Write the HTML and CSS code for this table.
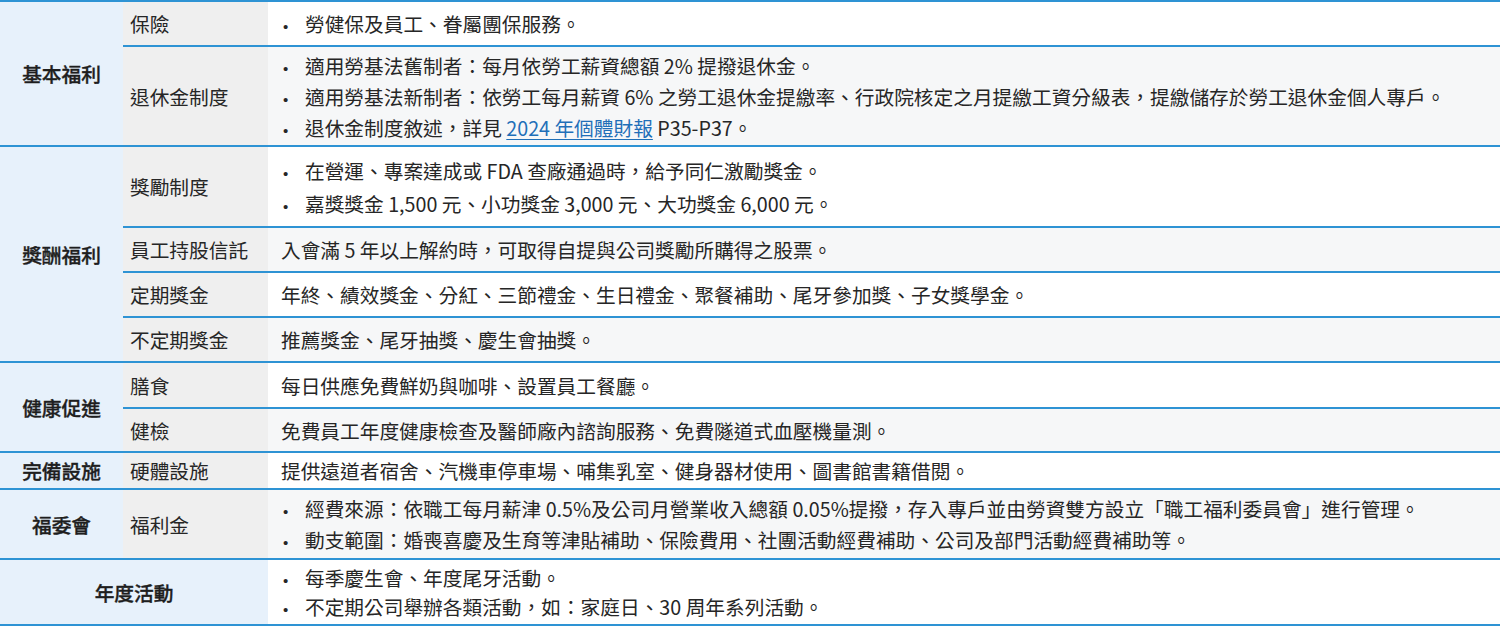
FILE: index.html
```html
<!DOCTYPE html>
<html lang="zh-Hant">
<head>
<meta charset="utf-8">
<title>福利制度</title>
<link rel="stylesheet" href="styles.css">
</head>
<body>
<table class="benefits">
  <colgroup>
    <col class="c-cat">
    <col class="c-item">
    <col class="c-desc">
  </colgroup>
  <tbody>
    <tr class="h43">
      <th class="cat" rowspan="2">基本福利</th>
      <td class="item inner">保險</td>
      <td class="desc inner">
        <ul class="bl"><li>勞健保及員工、眷屬團保服務。</li></ul>
      </td>
    </tr>
    <tr class="h98 alt">
      <td class="item">退休金制度</td>
      <td class="desc">
        <ul class="bl">
          <li>適用勞基法舊制者：每月依勞工薪資總額 2% 提撥退休金。</li>
          <li>適用勞基法新制者：依勞工每月薪資 6% 之勞工退休金提繳率、行政院核定之月提繳工資分級表，提繳儲存於勞工退休金個人專戶。</li>
          <li>退休金制度敘述，詳見 <a href="#">2024 年個體財報</a> P35-P37。</li>
        </ul>
      </td>
    </tr>

    <tr class="h79">
      <th class="cat" rowspan="4">獎酬福利</th>
      <td class="item inner">獎勵制度</td>
      <td class="desc inner">
        <ul class="bl two">
          <li>在營運、專案達成或 FDA 查廠通過時，給予同仁激勵獎金。</li>
          <li>嘉獎獎金 1,500 元、小功獎金 3,000 元、大功獎金 6,000 元。</li>
        </ul>
      </td>
    </tr>
    <tr class="h43 alt">
      <td class="item inner">員工持股信託</td>
      <td class="desc inner">入會滿 5 年以上解約時，可取得自提與公司獎勵所購得之股票。</td>
    </tr>
    <tr class="h43">
      <td class="item inner">定期獎金</td>
      <td class="desc inner">年終、績效獎金、分紅、三節禮金、生日禮金、聚餐補助、尾牙參加獎、子女獎學金。</td>
    </tr>
    <tr class="h43 alt">
      <td class="item">不定期獎金</td>
      <td class="desc">推薦獎金、尾牙抽獎、慶生會抽獎。</td>
    </tr>

    <tr class="h44">
      <th class="cat" rowspan="2">健康促進</th>
      <td class="item inner">膳食</td>
      <td class="desc inner">每日供應免費鮮奶與咖啡、設置員工餐廳。</td>
    </tr>
    <tr class="h42 alt">
      <td class="item">健檢</td>
      <td class="desc">免費員工年度健康檢查及醫師廠內諮詢服務、免費隧道式血壓機量測。</td>
    </tr>

    <tr class="h35">
      <th class="cat">完備設施</th>
      <td class="item">硬體設施</td>
      <td class="desc">提供遠道者宿舍、汽機車停車場、哺集乳室、健身器材使用、圖書館書籍借閱。</td>
    </tr>

    <tr class="h68 alt">
      <th class="cat">福委會</th>
      <td class="item">福利金</td>
      <td class="desc">
        <ul class="bl">
          <li>經費來源：依職工每月薪津 0.5%及公司月營業收入總額 0.05%提撥，存入專戶並由勞資雙方設立「職工福利委員會」進行管理。</li>
          <li>動支範圍：婚喪喜慶及生育等津貼補助、保險費用、社團活動經費補助、公司及部門活動經費補助等。</li>
        </ul>
      </td>
    </tr>

    <tr class="h64">
      <th class="cat" colspan="2">年度活動</th>
      <td class="desc">
        <ul class="bl tight">
          <li>每季慶生會、年度尾牙活動。</li>
          <li>不定期公司舉辦各類活動，如：家庭日、30 周年系列活動。</li>
        </ul>
      </td>
    </tr>
  </tbody>
</table>
</body>
</html>
```

FILE: styles.css
```css
html, body {
  margin: 0;
  padding: 0;
  background: #ffffff;
}

body {
  font-family: "Noto Sans CJK TC", "Noto Sans", sans-serif;
  font-size: 19.7px;
  color: #262626;
}

.benefits {
  width: 1500px;
  table-layout: fixed;
  border-collapse: separate;
  border-spacing: 0;
  border-top: 2px solid #2e93d4;
}

.c-cat { width: 123px; }
.c-item { width: 145px; }
.c-desc { width: 1232px; }

.benefits th,
.benefits td {
  padding: 0;
  vertical-align: middle;
  border-bottom: 2px solid #2e93d4;
  line-height: 31px;
  white-space: nowrap;
}

.cat {
  background: #e7f1fb;
  font-weight: 500;
  text-align: center;
  color: #1e1e1e;
  -webkit-text-stroke: 0.35px #1e1e1e;
}

.item {
  background: #efefef;
  padding-left: 7px !important;
  text-align: left;
}

.desc {
  background: #ffffff;
  padding-left: 13px !important;
  text-align: left;
}

.alt .desc {
  background: #f6f7f8;
}

.h43 td { height: 43px; }
.h98 td { height: 98px; }
.h79 td { height: 79px; }
.h44 td { height: 44px; }
.h42 td { height: 42px; }
.h35 td { height: 35px; }
.h68 td { height: 68px; }
.h64 td { height: 64px; }

.bl {
  list-style: none;
  margin: 0;
  padding: 0;
}

.bl li {
  padding-left: 24px;
}

.bl li::before {
  content: "•";
  display: inline-block;
  width: 24px;
  margin-left: -24px;
  padding-left: 2px;
  box-sizing: border-box;
  font-family: "Liberation Sans", sans-serif;
  font-size: 15px;
  line-height: 1;
}

.bl.two li {
  line-height: 33px;
}

.bl.tight li {
  line-height: 29px;
}

.desc a {
  color: #1f6fb8;
  text-decoration: underline;
  text-underline-offset: 3px;
}
```
